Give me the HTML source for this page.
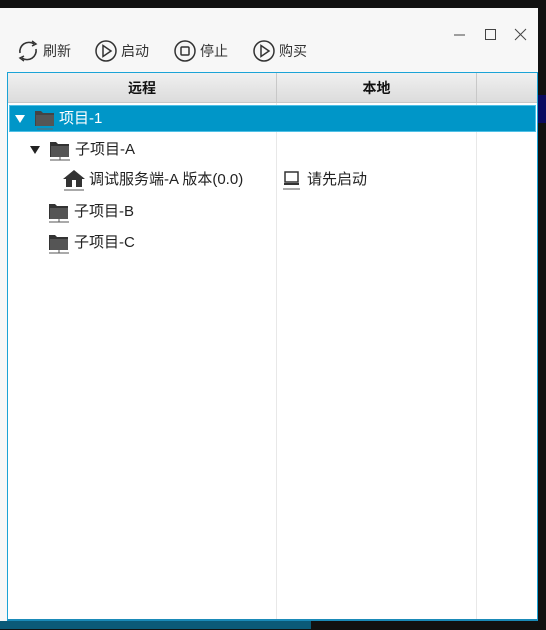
<!DOCTYPE html>
<html><head><meta charset="utf-8"><style>
*{margin:0;padding:0;box-sizing:border-box}
body{width:546px;height:630px;background:#111;position:relative;overflow:hidden;font-family:"Liberation Sans","Noto Sans CJK SC",sans-serif;font-size:14px;color:#222}
.win{position:absolute;left:0;top:8px;width:538px;height:613px;background:#f7f7f7}
.bot{position:absolute;left:0;top:621px;width:311px;height:8px;background:#0b5a78}
.rstrip{position:absolute;left:538px;top:95px;width:8px;height:28px;background:#0a0a60}
.tb{position:absolute;top:38px;display:flex;align-items:center;font-size:14px;color:#333}
.tb svg{margin-right:2px}
.table{position:absolute;left:7px;top:72px;width:531px;height:549px;border:1px solid #1ba3d6;border-bottom:2px solid #1a8ab8;background:#fff}
.hdr{position:absolute;left:0;top:0;width:529px;height:30px;background:linear-gradient(#f0f0f0,#dcdcdc);border-bottom:1px solid #c8c8c8}
.hc{position:absolute;top:0;height:30px;line-height:30px;text-align:center;font-weight:bold;color:#111;border-right:1px solid #c8c8c8}
.vl{position:absolute;top:30px;bottom:0;width:1px;background:#e8e8e8}
.sel{position:absolute;left:1px;top:32px;width:527px;height:27px;background:#0096c8;border:1px solid #4fc0e6}
.row{position:absolute;height:30px;line-height:30px;display:flex;align-items:center;white-space:nowrap;font-size:15px}
.tri{width:0;height:0;border-left:5px solid transparent;border-right:5px solid transparent;border-top:8px solid #222;margin-right:9px}
</style></head><body>
<div class="win">
<svg style="position:absolute;left:430px;top:18px" width="100" height="20">
<line x1="24" y1="9" x2="35" y2="9" stroke="#444" stroke-width="1"/>
<rect x="55.5" y="3.5" width="10" height="10" fill="none" stroke="#444"/>
<line x1="85" y1="3" x2="96" y2="14" stroke="#444"/><line x1="96" y1="3" x2="85" y2="14" stroke="#444"/>
</svg>
</div>
<div class="bot"></div><div class="rstrip"></div>
<div class="tb" style="left:15px;top:39px"><svg width="26" height="24" viewBox="0 0 26 24"><path d="M5 14 A9 9 0 0 1 19 5" fill="none" stroke="#333" stroke-width="1.6"/><path d="M21 10 A9 9 0 0 1 7 19" fill="none" stroke="#333" stroke-width="1.6"/><path d="M17 2 L21 5 L17 7" fill="none" stroke="#333" stroke-width="1.5"/><path d="M9 17 L5 19 L9 22" fill="none" stroke="#333" stroke-width="1.5"/></svg>刷新</div>
<div class="tb" style="left:95px;top:39px"><svg width="24" height="24"><circle cx="11" cy="12" r="10" fill="none" stroke="#333" stroke-width="1.5"/><path d="M8 6.5 L16 12 L8 17.5Z" fill="none" stroke="#333" stroke-width="1.5"/></svg>启动</div>
<div class="tb" style="left:174px;top:39px"><svg width="24" height="24"><circle cx="11" cy="12" r="10" fill="none" stroke="#333" stroke-width="1.5"/><rect x="7" y="8" width="8" height="8" rx="1" fill="none" stroke="#333" stroke-width="1.5"/></svg>停止</div>
<div class="tb" style="left:253px;top:39px"><svg width="24" height="24"><circle cx="11" cy="12" r="10" fill="none" stroke="#333" stroke-width="1.5"/><path d="M8 6.5 L16 12 L8 17.5Z" fill="none" stroke="#333" stroke-width="1.5"/></svg>购买</div>
<div class="table">
<div class="hdr">
<div class="hc" style="left:0;width:269px">远程</div>
<div class="hc" style="left:269px;width:200px">本地</div>
</div>
<div class="vl" style="left:268px"></div><div class="vl" style="left:468px"></div>
<div class="sel"></div>
<div class="row" style="left:7px;top:31px;color:#fff"><span class="tri" style="border-top-color:#fff"></span><svg width="22" height="22" style="margin-right:3px"><path d="M1 3h6l2 2h11v13H1z" fill="#444"/><rect x="2" y="7" width="18" height="11" fill="#555"/><line x1="3" y1="21" x2="19" y2="21" stroke="#666"/></svg>项目-1</div>
<div class="row" style="left:22px;top:62px"><span class="tri"></span><svg width="22" height="22" style="margin-right:4px"><path d="M1 3h6l2 2h11v13H1z" fill="#333"/><rect x="2" y="7" width="18" height="11" fill="#555"/><line x1="1" y1="21" x2="21" y2="21" stroke="#555"/><line x1="11" y1="18" x2="11" y2="21" stroke="#555"/></svg>子项目-A</div>
<div class="row" style="left:54px;top:92px"><svg width="24" height="24" style="margin-right:3px"><path d="M12 2 L1 11 H4 V19 H20 V11 H23Z" fill="#333"/><rect x="10" y="12" width="4" height="7" fill="#fff"/><line x1="2" y1="22" x2="22" y2="22" stroke="#555"/></svg>调试服务端-A 版本(0.0)</div>
<div class="row" style="left:274px;top:92px"><svg width="20" height="22" style="margin-right:5px"><rect x="3" y="3" width="13" height="10" fill="none" stroke="#333" stroke-width="1.5"/><rect x="2" y="14" width="15" height="2" fill="#333"/><line x1="1" y1="20" x2="18" y2="20" stroke="#555"/></svg>请先启动</div>
<div class="row" style="left:40px;top:124px"><svg width="22" height="22" style="margin-right:4px"><path d="M1 3h6l2 2h11v13H1z" fill="#333"/><rect x="2" y="7" width="18" height="11" fill="#555"/><line x1="1" y1="21" x2="21" y2="21" stroke="#555"/><line x1="11" y1="18" x2="11" y2="21" stroke="#555"/></svg>子项目-B</div>
<div class="row" style="left:40px;top:155px"><svg width="22" height="22" style="margin-right:4px"><path d="M1 3h6l2 2h11v13H1z" fill="#333"/><rect x="2" y="7" width="18" height="11" fill="#555"/><line x1="1" y1="21" x2="21" y2="21" stroke="#555"/><line x1="11" y1="18" x2="11" y2="21" stroke="#555"/></svg>子项目-C</div>
</div>
</body></html>
